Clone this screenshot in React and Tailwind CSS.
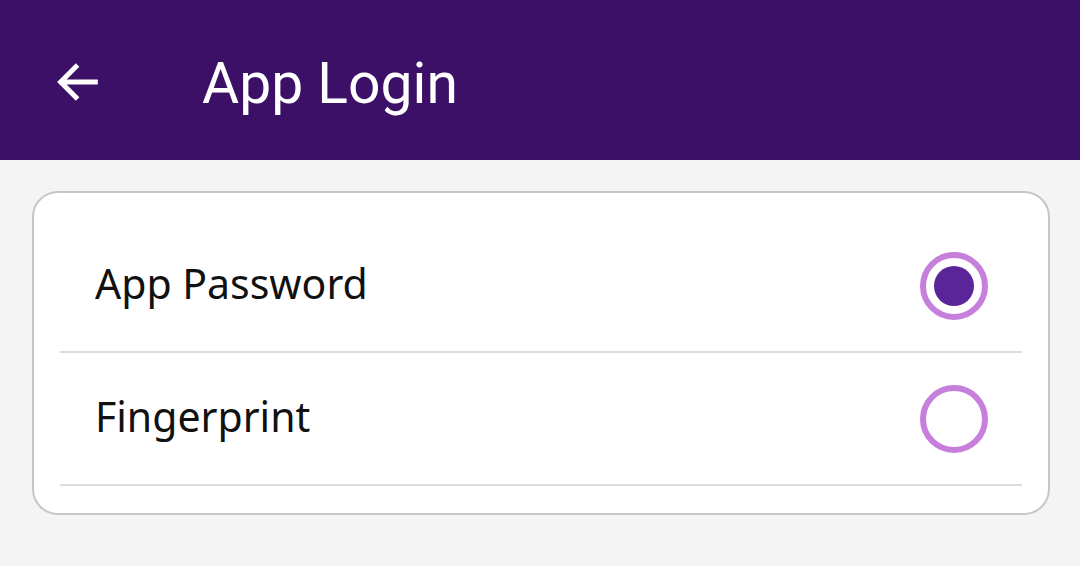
const Radio = ({ checked }) => (
  <div className="w-[68px] h-[68px] rounded-full border-[6px] border-[#c77fdc] flex items-center justify-center">
    {checked && <div className="w-[40px] h-[40px] rounded-full bg-[#5a2598]" />}
  </div>
);

const Row = ({ label, checked }) => (
  <div className="h-[133px] flex items-center justify-between pl-[35px] pr-[34px] border-b-2 border-[#dcdcdc]">
    <span className="text-[41px] text-[#111] font-['Noto_Sans',sans-serif] -mt-[4px]">{label}</span>
    <Radio checked={checked} />
  </div>
);

export default function App() {
  return (
    <div className="w-[1080px] h-[566px] bg-[#f4f4f4] font-['Roboto',sans-serif]">
      {/* Header */}
      <div className="h-[160px] bg-[#3c1066] flex items-center">
        <svg
          className="ml-[52px] mt-[4px]"
          width="52"
          height="52"
          viewBox="0 0 24 24"
          fill="none"
          stroke="white"
          strokeWidth="2.3"
          strokeLinecap="square"
        >
          <path d="M20 12H4.5M11 5l-7 7 7 7" />
        </svg>
        <h1 className="ml-[98px] mt-[6px] text-[57px] text-white leading-none">App Login</h1>
      </div>

      {/* Options */}
      <div className="pl-[32px] pr-[30px] pt-[31px]">
        <div className="bg-white border-2 border-[#c6c6c6] rounded-[26px] px-[26px] py-[27px]">
          <Row label="App Password" checked />
          <Row label="Fingerprint" />
        </div>
      </div>
    </div>
  );
}
